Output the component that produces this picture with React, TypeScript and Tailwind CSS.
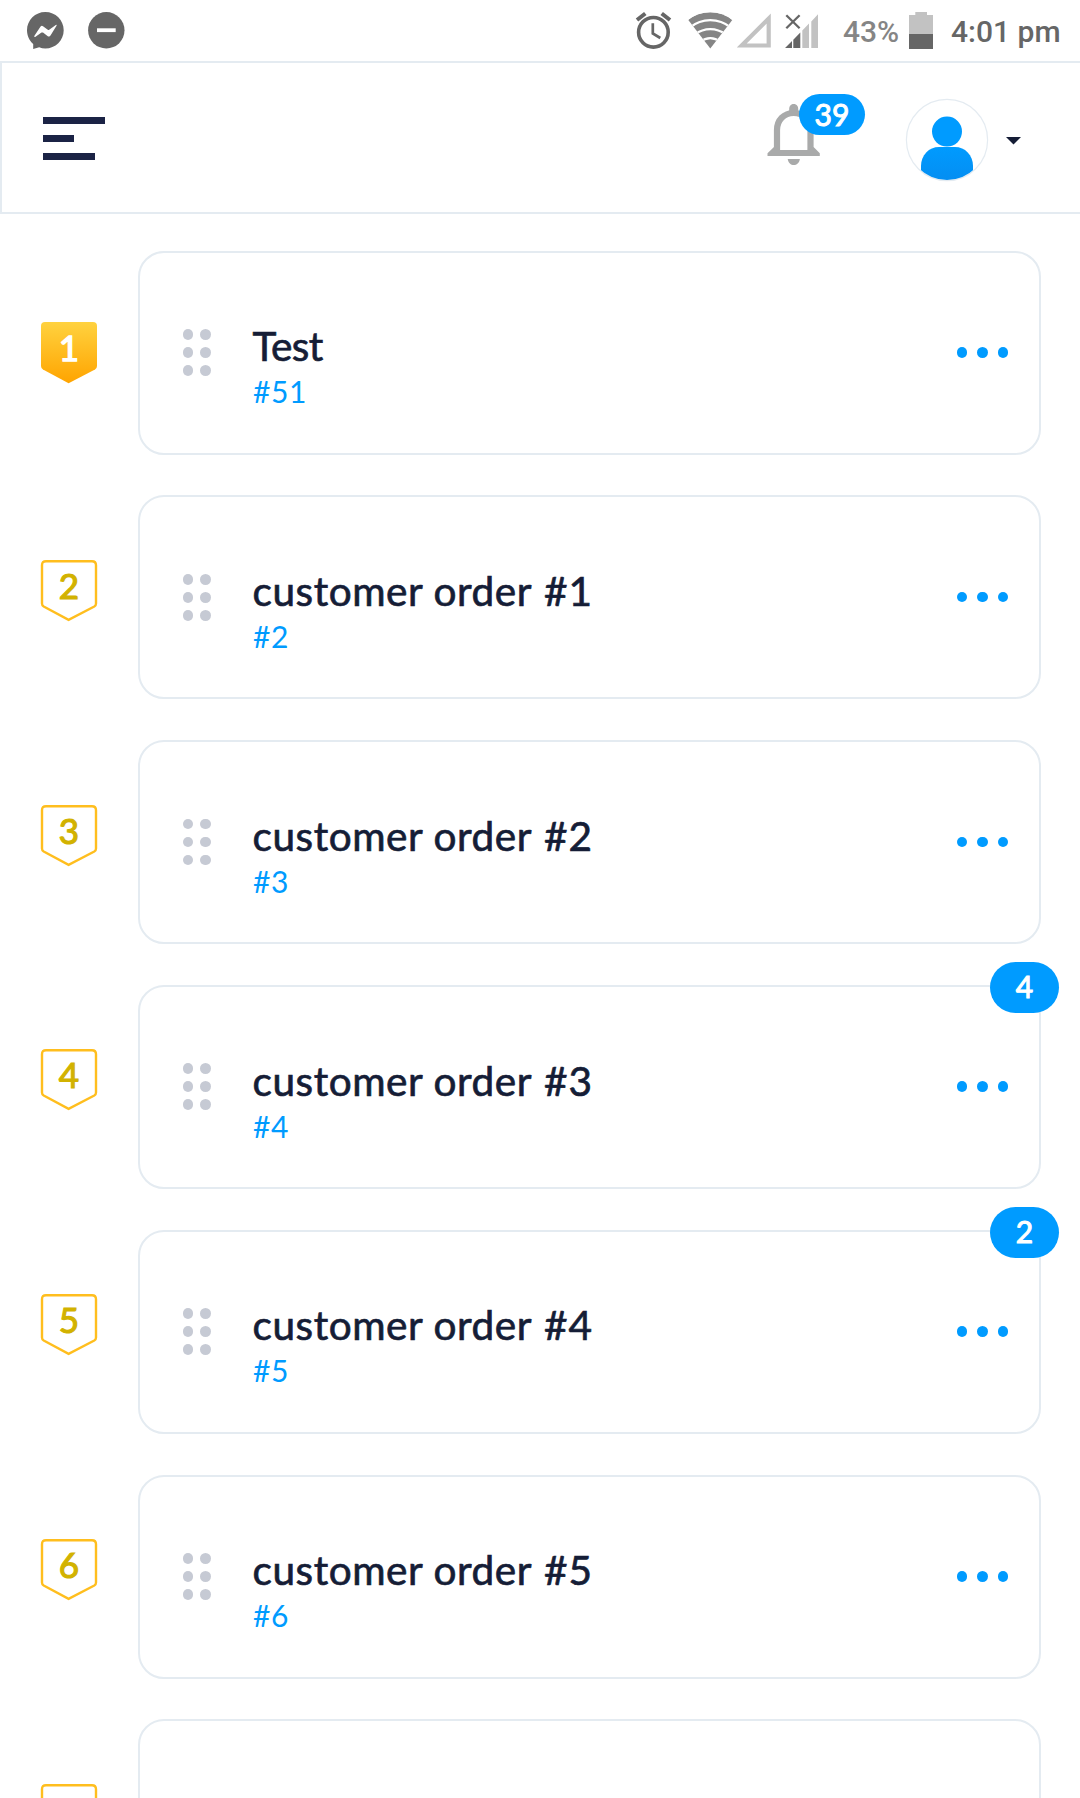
import React from "react";

type Order = { rank: number; title: string; number?: string; id: string; count?: number };

const orders: Order[] = [
  { rank: 1, title: "Test", id: "#51" },
  { rank: 2, title: "customer order", number: "#1", id: "#2" },
  { rank: 3, title: "customer order", number: "#2", id: "#3" },
  { rank: 4, title: "customer order", number: "#3", id: "#4", count: 4 },
  { rank: 5, title: "customer order", number: "#4", id: "#5", count: 2 },
  { rank: 6, title: "customer order", number: "#5", id: "#6" },
];

function StatusBar() {
  return (
    <div className="flex h-[61px] shrink-0 items-start font-['Roboto',sans-serif]">
      <svg className="ml-[26px] mt-[11px] h-[39px] w-[39px] shrink-0" viewBox="0 0 39 39">
        <path
          d="M19.3 1C9.2 1 1 9.200 1 19.200C1 24.800 3.500 29.700 7.200 33L7.200 38L13.200 36.300C15.100 37.100 17.200 37.500 19.300 37.500C29.500 37.500 37.700 29.300 37.700 19.200C37.700 9.200 29.500 1 19.300 1Z"
          fill="#666"
        />
        <path
          d="M8.300 25L14.400 15.800Q15.600 14.300 17 15.200L21.800 18.700Q22.500 19.100 23.200 18.700L29.800 14Q31.200 13.300 30.500 14.800L24.800 24Q23.600 26.200 21.800 25.200L17 21.600Q16.300 21.200 15.500 21.600L9.200 25.900Q8 26.300 8.300 25Z"
          fill="#fff"
        />
      </svg>
      <svg className="ml-[22px] mt-[11px] h-[39px] w-[39px] shrink-0" viewBox="0 0 39 39">
        <circle cx="19.300" cy="19.300" r="18.200" fill="#666" />
        <rect x="10" y="17.300" width="18.700" height="3.800" fill="#fff" />
      </svg>

      <svg className="ml-auto mt-[11px] h-[39px] w-[37px] shrink-0" viewBox="0 0 37 39">
        <g fill="none" stroke="#666">
          <circle cx="18.400" cy="21.300" r="14.800" strokeWidth="3.600" />
          <path d="M2 9L10.300 2.500M26.700 2.500L35 9" strokeWidth="4" />
          <path d="M17.800 12.200V22.500L25.300 27" strokeWidth="2.700" />
        </g>
      </svg>
      <svg className="ml-[15px] mt-[11px] h-[39px] w-[46px] shrink-0" viewBox="0 0 46 39">
        <defs>
          <clipPath id="wifiFan">
            <path d="M23.300 37.500L1.300 9Q10.500 1.300 23.300 1.300T45.300 9Z" />
          </clipPath>
        </defs>
        <g clipPath="url(#wifiFan)">
          <path d="M0 9.500Q10.500 1.300 23.300 1.300T46 9.500L23.300 38.500Z" fill="#858585" />
          <g fill="none" stroke="#fff" strokeWidth="2.300">
            <path d="M3 16.500Q12 9.200 23.300 9.200T43.600 16.500" />
            <path d="M8 23.500Q15 18.200 23.300 18.200T38.600 23.500" />
            <path d="M13 31Q18 27.200 23.300 27.200T33.600 31" />
          </g>
        </g>
      </svg>
      <svg className="ml-[4px] mt-[11px] h-[39px] w-[36px] shrink-0" viewBox="0 0 36 39">
        <path d="M4.700 34.500L31.700 7.500V34.500Z" fill="none" stroke="#c2c2c2" strokeWidth="4.200" />
      </svg>
      <svg className="ml-[11px] mt-[11px] h-[39px] w-[36px] shrink-0" viewBox="0 0 36 39">
        <path d="M1 37L8 30V37ZM9.300 28.700L16.300 21.600V37H9.300Z" fill="#666" />
        <path d="M18.300 19.500L25 12.500V37H18.300ZM27.300 10.500L34 3.300V37H27.300Z" fill="#c2c2c2" />
        <path d="M2.300 4.300L15.600 17.300M15.600 4.300L2.300 17.300" fill="none" stroke="#666" strokeWidth="2.300" />
      </svg>
      <span className="ml-[23px] mt-[14px] w-[56px] whitespace-nowrap text-[30px] font-medium leading-[36px] tracking-[-0.1px] text-[#858585]">
        43%
      </span>
      <svg className="ml-[9px] mt-[11px] h-[39px] w-[26px] shrink-0" viewBox="0 0 26 39">
        <path d="M1 4H7.300V1H19V4H25V23H1Z" fill="#c2c2c2" />
        <rect x="1" y="23" width="24" height="15" fill="#666" />
      </svg>
      <span className="ml-[17px] mr-[17px] mt-[14px] w-[112px] whitespace-nowrap text-[30px] font-medium leading-[36px] text-[#666]">
        4:01 pm
      </span>
    </div>
  );
}

function Header() {
  return (
    <header className="flex h-[153px] shrink-0 border-y-2 border-l-2 border-[#e4ebf1]">
      <div className="ml-[41px] mt-[54px] flex flex-col gap-[11px]">
        <span className="h-[7px] w-[62px] bg-[#1b2345]" />
        <span className="h-[7px] w-[31px] bg-[#1b2345]" />
        <span className="h-[7px] w-[52px] bg-[#1b2345]" />
      </div>
      <div className="relative ml-auto mt-[41px] h-[62px] w-[54px]">
        <svg className="h-[62px] w-[54px]" viewBox="0 0 54 62">
          <path
            d="M10 46V26C10 16 17 9 26.700 9S43.500 16 43.500 26V46"
            fill="none"
            stroke="#a9aaaa"
            strokeWidth="6.200"
          />
          <path
            d="M22.200 9V4.400a4.500 4.500 0 0 1 9 0V9ZM7 43L13 46H40.500L46.600 43L52.800 49.300V52H.5V49.300ZM20.700 55H32.900C32.200 59 29.700 61 26.800 61S21.400 59 20.700 55Z"
            fill="#a9aaaa"
          />
        </svg>
        <span className="absolute left-[32px] top-[-10px] flex h-[41px] w-[66px] items-center justify-center rounded-[21px] bg-[#009bff] pb-[1px] font-['Lato',sans-serif] text-[30px] leading-none text-white [-webkit-text-stroke:1px_#fff]">
          39
        </span>
      </div>
      <svg className="ml-[84px] mt-[35px] h-[84px] w-[84px] shrink-0" viewBox="0 0 84 84">
        <defs>
          <linearGradient id="person" x1="0" y1="0" x2="0" y2="1">
            <stop offset="0" stopColor="#009bff" />
            <stop offset="1" stopColor="#058df1" />
          </linearGradient>
          <clipPath id="avatarCircle">
            <circle cx="42" cy="42" r="40" />
          </clipPath>
        </defs>
        <circle cx="42" cy="42" r="40.600" fill="#fff" stroke="#e4ebf1" strokeWidth="1.200" />
        <circle cx="42" cy="33.600" r="15" fill="#009bff" />
        <path
          clipPath="url(#avatarCircle)"
          d="M16 84V68C16 57 24 49 34 49H50C60 49 68 57 68 68V84Z"
          fill="url(#person)"
        />
      </svg>
      <svg className="ml-[16px] mr-[58px] mt-[73px] h-[9px] w-[17px] shrink-0" viewBox="0 0 17 9">
        <path d="M1 1H16L8.500 8.500Z" fill="#151d36" />
      </svg>
    </header>
  );
}

function BadgeOutline() {
  return (
    <svg className="h-[64px] w-[58px]" viewBox="0 0 58 64">
      <path
        d="M6 2.200H52Q56 2.200 56 6.200V44.500Q56 46.500 54.300 47.500L28.600 60.800L3.700 47.500Q2 46.500 2 44.500V6.200Q2 2.200 6 2.200Z"
        fill="#fff"
        stroke="#ffbe1e"
        strokeWidth="2.400"
      />
    </svg>
  );
}

function RankBadge({ rank }: { rank: number }) {
  if (rank === 1) {
    return (
      <div className="relative ml-[40px] mt-[70.400px] h-[64px] w-[58px]">
        <svg className="h-[64px] w-[58px]" viewBox="0 0 58 64">
          <defs>
            <linearGradient id="gold" x1="0" y1="0" x2="0" y2="1">
              <stop offset="0" stopColor="#ffd23f" />
              <stop offset="1" stopColor="#ffa400" />
            </linearGradient>
          </defs>
          <path d="M5 1H53Q57 1 57 5V45Q57 47 55 48.500L28.600 62.300L3 48.500Q1 47 1 45V5Q1 1 5 1Z" fill="url(#gold)" />
        </svg>
        <span className="absolute inset-x-0 top-[7.400px] text-center text-[35px] leading-[38px] text-white [-webkit-text-stroke:1.300px_#fff]">
          {rank}
        </span>
      </div>
    );
  }
  return (
    <div className="relative ml-[40px] mt-[63.400px] h-[64px] w-[58px]">
      <BadgeOutline />
      <span className="absolute inset-x-0 top-[7px] text-center text-[35px] leading-[38px] text-[#d2b200] [-webkit-text-stroke:1.200px_#d2b200]">
        {rank}
      </span>
    </div>
  );
}

function OrderRow({ order }: { order: Order }) {
  return (
    <div className="flex h-[204px] shrink-0 items-start">
      <RankBadge rank={order.rank} />
      <div className="relative ml-[40px] flex h-[204px] w-[903px] items-start rounded-[26px] border-2 border-[#e4ebf1] bg-white">
        <div className="ml-[42.500px] mt-[76.500px] grid grid-cols-2 gap-[7.300px]">
          {[0, 1, 2, 3, 4, 5].map((i) => (
            <span key={i} className="h-[10.700px] w-[10.700px] rounded-full bg-[#c6cad4]" />
          ))}
        </div>
        <div className="ml-[41.300px] mt-[69.600px] flex flex-col">
          <div className="flex gap-[12px] whitespace-nowrap text-[40.500px] leading-[48px] text-[#151d36] [-webkit-text-stroke:0.7px_#151d36]">
            <span className={order.number ? "tracking-[0.58px]" : "tracking-[-0.5px]"}>{order.title}</span>
            {order.number && <span className="tracking-[0.9px]">{order.number}</span>}
          </div>
          <span className="whitespace-nowrap pl-[0.5px] text-[30px] leading-[42px] tracking-[0.6px] text-[#009bff]">
            {order.id}
          </span>
        </div>
        <div className="ml-auto mr-[31px] mt-[94.500px] flex gap-[10px]">
          <span className="h-[10.500px] w-[10.500px] rounded-full bg-[#009bff]" />
          <span className="h-[10.500px] w-[10.500px] rounded-full bg-[#009bff]" />
          <span className="h-[10.500px] w-[10.500px] rounded-full bg-[#009bff]" />
        </div>
        {order.count !== undefined && (
          <span className="absolute right-[-20px] top-[-25px] flex h-[51px] w-[69px] items-center justify-center rounded-[26px] bg-[#009bff] pb-[3px] text-[30px] leading-none text-white [-webkit-text-stroke:1px_#fff]">
            {order.count}
          </span>
        )}
      </div>
    </div>
  );
}

export default function App() {
  return (
    <div className="flex h-[1798px] w-[1080px] flex-col overflow-hidden bg-white font-['Lato',sans-serif]">
      <StatusBar />
      <Header />
      <main className="flex flex-col gap-[40.800px] pt-[36.600px]">
        {orders.map((o) => (
          <OrderRow key={o.rank} order={o} />
        ))}
        {/* Next row, only its top edge reaches the viewport */}
        <div className="flex h-[204px] shrink-0 items-start">
          <div className="ml-[40px] mt-[63.400px] h-[64px] w-[58px]">
            <BadgeOutline />
          </div>
          <div className="ml-[40px] h-[204px] w-[903px] rounded-[26px] border-2 border-[#e4ebf1] bg-white" />
        </div>
      </main>
    </div>
  );
}
